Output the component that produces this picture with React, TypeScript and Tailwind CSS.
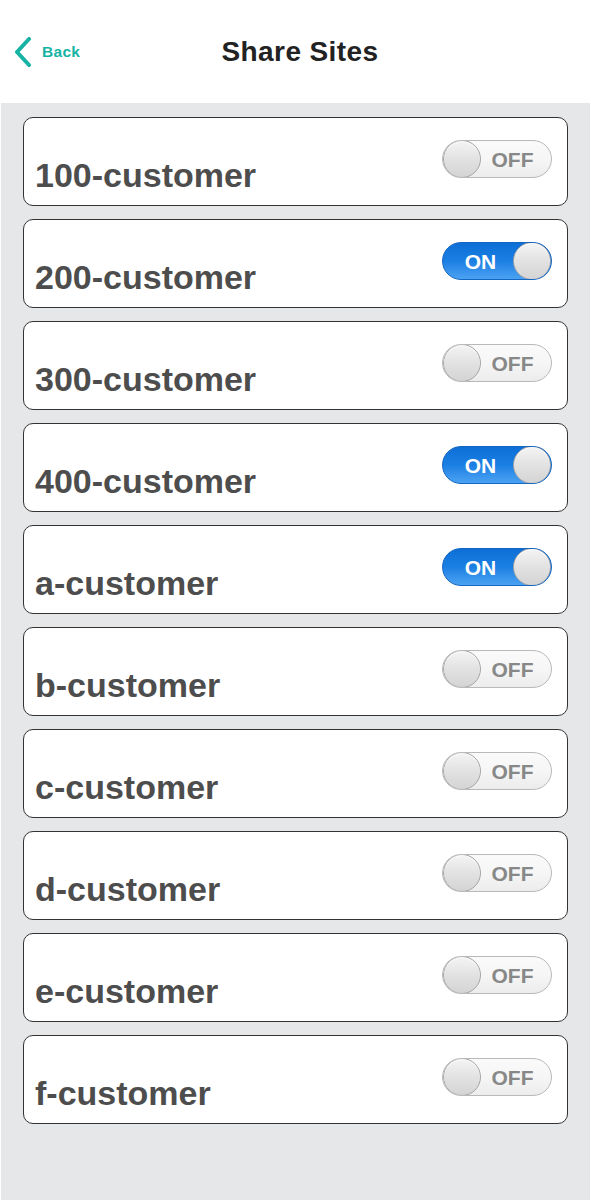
import React, { useState } from 'react';

const sites = [
  { name: '100-customer', on: false },
  { name: '200-customer', on: true },
  { name: '300-customer', on: false },
  { name: '400-customer', on: true },
  { name: 'a-customer', on: true },
  { name: 'b-customer', on: false },
  { name: 'c-customer', on: false },
  { name: 'd-customer', on: false },
  { name: 'e-customer', on: false },
  { name: 'f-customer', on: false },
];

const Knob = () => (
  <div className="w-[38px] h-[38px] shrink-0 rounded-full border border-[#a4a4a4] bg-gradient-to-b from-[#f4f4f4] via-[#e2e2e2] to-[#d4d4d4] shadow-[inset_0_1px_1px_rgba(255,255,255,0.9)]" />
);

const Toggle = ({ on, onClick }: { on: boolean; onClick: () => void }) => {
  if (on) {
    return (
      <button
        onClick={onClick}
        className="w-[110px] h-[38px] rounded-full flex items-center bg-gradient-to-b from-[#0d6fd6] via-[#1a7fe3] to-[#4aa2f2] border border-[#1466c2] overflow-hidden"
      >
        <span className="flex-1 pl-[5px] text-center text-[21px] font-bold leading-none text-white">ON</span>
        <Knob />
      </button>
    );
  }
  return (
    <button
      onClick={onClick}
      className="w-[110px] h-[38px] rounded-full flex items-center bg-gradient-to-b from-[#fafafa] via-[#f6f6f6] to-[#ececec] border border-[#b9b9b9] overflow-hidden"
    >
      <Knob />
      <span className="flex-1 pr-[7px] text-center text-[21px] font-bold leading-none text-[#888888]">OFF</span>
    </button>
  );
};

const App = () => {
  const [items, setItems] = useState(sites);

  const flip = (i: number) => {
    setItems(items.map((s, idx) => (idx === i ? { ...s, on: !s.on } : s)));
  };

  return (
    <div className="w-[591px] min-h-[1200px] bg-white flex flex-col font-['Liberation_Sans',Arial,sans-serif]">
      {/* header */}
      <div className="h-[103px] grid grid-cols-[1fr_auto_1fr] items-center pl-[13px]">
        <button className="flex items-center gap-[9px] justify-self-start">
          <svg width="20" height="30" viewBox="0 0 20 30" fill="none">
            <polyline
              points="16,2 4,15 16,28"
              stroke="#16b3a4"
              strokeWidth="4"
              strokeLinecap="round"
              strokeLinejoin="round"
            />
          </svg>
          <span className="text-[15.5px] font-bold leading-none tracking-[0.3px] text-[#16b3a4]">Back</span>
        </button>
        <h1 className="ml-[-4px] text-[28px] font-bold leading-none tracking-[0.4px] text-[#222222]">Share Sites</h1>
        <div />
      </div>

      {/* list */}
      <div className="flex-1 mx-px bg-[#e6e7e9] px-[22px] pt-[14px] flex flex-col gap-[13px]">
        {items.map((s, i) => (
          <div
            key={s.name}
            className="h-[89px] rounded-[10px] border border-[#333333] bg-white flex justify-between pl-[11px] pr-[15px]"
          >
            <span className="mt-[40px] text-[34px] font-bold leading-none text-[#4d4d4d]">{s.name}</span>
            <div className="mt-[22px]">
              <Toggle on={s.on} onClick={() => flip(i)} />
            </div>
          </div>
        ))}
      </div>
    </div>
  );
};

export default App;
